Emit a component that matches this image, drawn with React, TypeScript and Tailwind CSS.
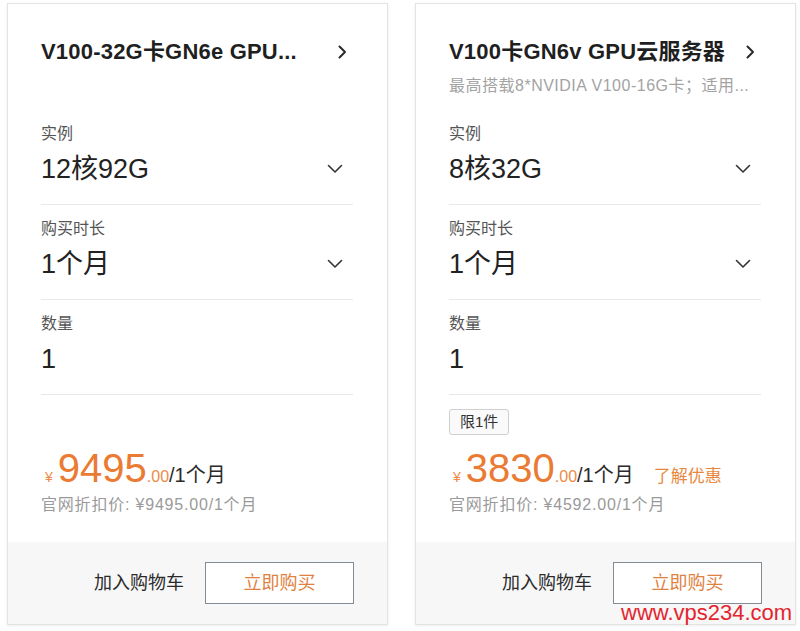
import React from "react";

type Row = { label: string; value: string; select?: boolean };

type Product = {
  title: string;
  subtitle?: string;
  rows: Row[];
  badge?: string;
  price: string;
  list: string;
  promo?: boolean;
};

const products: Product[] = [
  {
    title: "V100-32G卡GN6e GPU...",
    rows: [
      { label: "实例", value: "12核92G", select: true },
      { label: "购买时长", value: "1个月", select: true },
      { label: "数量", value: "1" },
    ],
    price: "9495",
    list: "9495.00",
  },
  {
    title: "V100卡GN6v GPU云服务器",
    subtitle: "最高搭载8*NVIDIA V100-16G卡；适用...",
    rows: [
      { label: "实例", value: "8核32G", select: true },
      { label: "购买时长", value: "1个月", select: true },
      { label: "数量", value: "1" },
    ],
    badge: "限1件",
    price: "3830",
    list: "4592.00",
    promo: true,
  },
];

const ChevronRight = () => (
  <svg width="9" height="14" viewBox="0 0 9 14" fill="none" className="mr-[6px]">
    <path d="M1.5 1.5L7 7l-5.5 5.5" stroke="#2b2b2b" strokeWidth="2" strokeLinecap="round" strokeLinejoin="round" />
  </svg>
);

const ChevronDown = () => (
  <svg width="16" height="10" viewBox="0 0 16 10" fill="none" className="mr-[10px]">
    <path d="M1.5 1.5L8 8l6.5-6.5" stroke="#333" strokeWidth="1.6" strokeLinecap="round" strokeLinejoin="round" />
  </svg>
);

const Card = ({ p }: { p: Product }) => {
  return (
    <div className="w-[381px] border border-[#e3e3e3] bg-white shadow-[0_1px_3px_rgba(0,0,0,0.08)] flex flex-col">
      <div className="pl-[33px] pr-[34px]">
        {/* header */}
        <div className="h-[106px] pt-[34px]">
          <div className="flex items-center justify-between h-[28px]">
            <span className="text-[22px] leading-[28px] font-semibold text-[#1f1f1f] tracking-[0.2px]">{p.title}</span>
            <ChevronRight />
          </div>
          {p.subtitle && (
            <div className="mt-[10px] text-[16px] leading-[20px] text-[#a3a3a3] whitespace-nowrap tracking-[0.5px]">
              {p.subtitle}
            </div>
          )}
        </div>

        {p.rows.map((r) => (
          <div key={r.label} className="pt-[14px] pb-[17px] border-b border-[#e8e8e8]">
            <div className="text-[16px] leading-[20px] text-[#555]">{r.label}</div>
            <div className="mt-[7px] h-[36px] flex items-center justify-between">
              <span className="text-[27px] leading-[36px] text-[#222]">{r.value}</span>
              {r.select && <ChevronDown />}
            </div>
          </div>
        ))}

        {/* price */}
        <div className="h-[147px] pt-[14px]">
          <div className="h-[26px]">
            {p.badge && (
              <span className="inline-block h-[26px] px-[10px] border border-[#cfcfcf] rounded-[3px] bg-[#fafafa] text-[15px] leading-[24px] text-[#333]">
                {p.badge}
              </span>
            )}
          </div>
          <div className="mt-[9px] h-[48px] flex items-baseline whitespace-nowrap">
            <span className="ml-[4px] text-[14px] text-[#ee8a48]">¥</span>
            <span className="ml-[5px] text-[40px] leading-[48px] text-[#eb7a33]">{p.price}</span>
            <span className="text-[16px] text-[#ee8a48]">.00</span>
            <span className="text-[20px] text-[#2a2a2a]">/1个月</span>
            {p.promo && <span className="ml-[20px] text-[17px] text-[#e8883e]">了解优惠</span>}
          </div>
          <div className="mt-[1px] text-[16px] leading-[24px] text-[#9a9a9a] whitespace-nowrap tracking-[0.8px]">
            官网折扣价: ¥{p.list}/1个月
          </div>
        </div>
      </div>

      {/* footer */}
      <div className="h-[82px] bg-[#f7f7f7] flex items-center justify-end pr-[33px]">
        <span className="text-[18px] text-[#2a2a2a] mr-[21px]">加入购物车</span>
        <button className="w-[149px] h-[42px] border-[1.5px] border-[#838b94] bg-white text-[18px] text-[#e0823f]">
          立即购买
        </button>
      </div>
    </div>
  );
};

export default function App() {
  return (
    <div
      className="relative w-[800px] h-[631px] bg-white pt-[3px] pl-[7px] flex gap-[27px]"
      style={{ fontFamily: '"Liberation Sans", "Noto Sans CJK SC", sans-serif' }}
    >
      {products.map((p) => (
        <div key={p.title} className="h-[623px]">
          <Card p={p} />
        </div>
      ))}
      <div className="absolute left-[621px] top-[600px] text-[22px] leading-[26px] text-[#e3252f]">
        www.vps234.com
      </div>
    </div>
  );
}
